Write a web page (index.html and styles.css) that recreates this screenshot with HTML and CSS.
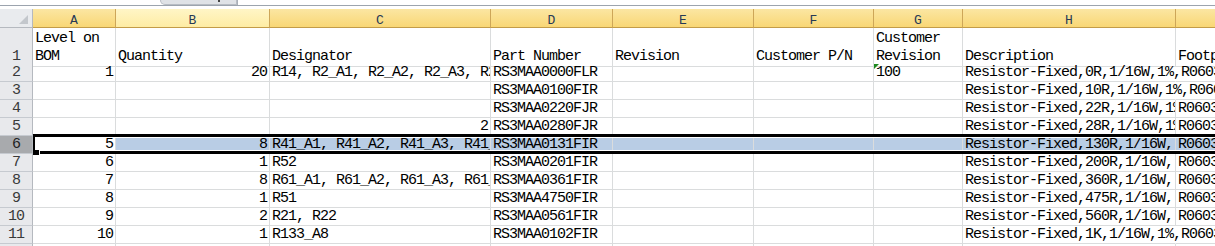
FILE: index.html
```html
<!DOCTYPE html>
<html lang="zh">
<head>
    <meta charset="UTF-8">
    <title>BOM</title>
    <link rel="stylesheet" href="styles.css">
</head>
<body>
    <div class="formula-bar">
        <div class="name-box"><span>A6</span></div>
        <div class="fx-btns"><span class="fx-mark"></span></div>
        <div class="formula-input"><span>5</span></div>
    </div>
    <div class="gap"></div>
    <div class="sheet">
        <div class="row col-heads">
            <div class="corner"></div>
            <div class="ch">A</div>
            <div class="ch hover">B</div>
            <div class="ch">C</div>
            <div class="ch">D</div>
            <div class="ch">E</div>
            <div class="ch">F</div>
            <div class="ch">G</div>
            <div class="ch">H</div>
            <div class="ch">I</div>
        </div>
        <div class="row tall">
            <div class="rh">1</div>
            <div class="c wrap">Level on BOM</div>
            <div class="c">Quantity</div>
            <div class="c">Designator</div>
            <div class="c">Part Number</div>
            <div class="c">Revision</div>
            <div class="c">Customer P/N</div>
            <div class="c wrap">Customer Revision</div>
            <div class="c">Description</div>
            <div class="c">Footprint</div>
        </div>
        <div class="row">
            <div class="rh">2</div>
            <div class="c r">1</div>
            <div class="c r">20</div>
            <div class="c">R14, R2_A1, R2_A2, R2_A3, R2_A4</div>
            <div class="c">RS3MAA0000FLR</div>
            <div class="c"></div>
            <div class="c"></div>
            <div class="c err">100</div>
            <div class="c spill">Resistor-Fixed,0R,1/16W,1%,R0603</div>
            <div class="c"></div>
        </div>
        <div class="row">
            <div class="rh">3</div>
            <div class="c"></div>
            <div class="c"></div>
            <div class="c"></div>
            <div class="c">RS3MAA0100FIR</div>
            <div class="c"></div>
            <div class="c"></div>
            <div class="c"></div>
            <div class="c spill">Resistor-Fixed,10R,1/16W,1%,R0603</div>
            <div class="c"></div>
        </div>
        <div class="row">
            <div class="rh">4</div>
            <div class="c"></div>
            <div class="c"></div>
            <div class="c"></div>
            <div class="c">RS3MAA0220FJR</div>
            <div class="c"></div>
            <div class="c"></div>
            <div class="c"></div>
            <div class="c">Resistor-Fixed,22R,1/16W,1%</div>
            <div class="c">R0603</div>
        </div>
        <div class="row">
            <div class="rh">5</div>
            <div class="c"></div>
            <div class="c"></div>
            <div class="c r">2</div>
            <div class="c">RS3MAA0280FJR</div>
            <div class="c"></div>
            <div class="c"></div>
            <div class="c"></div>
            <div class="c">Resistor-Fixed,28R,1/16W,1%</div>
            <div class="c">R0603</div>
        </div>
        <div class="row sel">
            <div class="rh">6</div>
            <div class="c r">5</div>
            <div class="c r hl">8</div>
            <div class="c hl">R41_A1, R41_A2, R41_A3, R41_A4</div>
            <div class="c hl">RS3MAA0131FIR</div>
            <div class="c hl"></div>
            <div class="c hl"></div>
            <div class="c hl"></div>
            <div class="c hl">Resistor-Fixed,130R,1/16W,</div>
            <div class="c hl">R0603</div>
            <div class="sel-box"></div>
            <div class="fill-handle"></div>
        </div>
        <div class="row">
            <div class="rh">7</div>
            <div class="c r">6</div>
            <div class="c r">1</div>
            <div class="c">R52</div>
            <div class="c">RS3MAA0201FIR</div>
            <div class="c"></div>
            <div class="c"></div>
            <div class="c"></div>
            <div class="c">Resistor-Fixed,200R,1/16W,</div>
            <div class="c">R0603</div>
        </div>
        <div class="row">
            <div class="rh">8</div>
            <div class="c r">7</div>
            <div class="c r">8</div>
            <div class="c">R61_A1, R61_A2, R61_A3, R61_A4</div>
            <div class="c">RS3MAA0361FIR</div>
            <div class="c"></div>
            <div class="c"></div>
            <div class="c"></div>
            <div class="c">Resistor-Fixed,360R,1/16W,</div>
            <div class="c">R0603</div>
        </div>
        <div class="row">
            <div class="rh">9</div>
            <div class="c r">8</div>
            <div class="c r">1</div>
            <div class="c">R51</div>
            <div class="c">RS3MAA4750FIR</div>
            <div class="c"></div>
            <div class="c"></div>
            <div class="c"></div>
            <div class="c">Resistor-Fixed,475R,1/16W,</div>
            <div class="c">R0603</div>
        </div>
        <div class="row">
            <div class="rh">10</div>
            <div class="c r">9</div>
            <div class="c r">2</div>
            <div class="c">R21, R22</div>
            <div class="c">RS3MAA0561FIR</div>
            <div class="c"></div>
            <div class="c"></div>
            <div class="c"></div>
            <div class="c">Resistor-Fixed,560R,1/16W,</div>
            <div class="c">R0603</div>
        </div>
        <div class="row">
            <div class="rh">11</div>
            <div class="c r">10</div>
            <div class="c r">1</div>
            <div class="c">R133_A8</div>
            <div class="c">RS3MAA0102FIR</div>
            <div class="c"></div>
            <div class="c"></div>
            <div class="c"></div>
            <div class="c spill">Resistor-Fixed,1K,1/16W,1%,R0603</div>
            <div class="c"></div>
        </div>
        <div class="row">
            <div class="rh"></div>
            <div class="c"></div>
            <div class="c"></div>
            <div class="c"></div>
            <div class="c"></div>
            <div class="c"></div>
            <div class="c"></div>
            <div class="c"></div>
            <div class="c"></div>
            <div class="c"></div>
        </div>
    </div>
</body>
</html>
```

FILE: styles.css
```css
html, body {
    margin: 0;
    padding: 0;
    background: #fff;
    overflow: hidden;
}
body {
    width: 1215px;
    height: 246px;
    font-family: "Liberation Mono", "Noto Sans CJK SC", monospace;
    font-size: 15px;
    letter-spacing: -1px;
    color: #000;
}
.formula-bar {
    display: flex;
    height: 5px;
    border-bottom: 1px solid #9ca4ae;
    overflow: hidden;
}
.name-box {
    width: 160px;
    padding-left: 62px;
    box-sizing: border-box;
}
.name-box span,
.formula-input span {
    display: block;
    line-height: 16px;
    margin-top: -12px;
    color: #222;
}
.fx-btns {
    position: relative;
    width: 75px;
    height: 4px;
    background: #dfe2e6;
    border: 1px solid #b7bcc3;
    border-top: none;
    border-radius: 0 0 0 14px;
}
.fx-mark {
    position: absolute;
    left: 57px;
    top: 0;
    width: 2px;
    height: 2px;
    background: #444;
}
.formula-input {
    border-left: 1px solid #a9afb7;
    padding-left: 12px;
}
.gap {
    height: 3px;
}
.row {
    display: grid;
    grid-template-columns: 33px 83px 154px 221px 122px 141px 120px 89px 213px 100px;
    height: 18px;
}
.row.tall {
    height: 36px;
}
.row.col-heads {
    height: 19px;
}
.corner {
    position: relative;
    background: #e9ebee;
    border-right: 1px solid #b5b9bf;
    border-bottom: 1px solid #b5b9bf;
}
.corner::after {
    content: "";
    position: absolute;
    right: 4px;
    bottom: 3px;
    border-left: 9px solid transparent;
    border-bottom: 9px solid #c3c7cc;
}
.ch {
    background: linear-gradient(#fbe6a2, #f9d775);
    border-right: 1px solid #cda658;
    border-bottom: 1px solid #c39c48;
    text-align: center;
    font-size: 13px;
    letter-spacing: 0;
    line-height: 15px;
    padding-top: 4px;
    color: #273a55;
    overflow: hidden;
}
.ch.hover {
    background: linear-gradient(#fff5c6, #feeca4);
}
.rh {
    background: #e8e9ec;
    border-right: 1px solid #b5b9bf;
    border-bottom: 1px solid #c6cad0;
    text-align: center;
    line-height: 17px;
    color: #3a3a3a;
}
.c {
    position: relative;
    border-right: 1px solid #dadcdd;
    border-bottom: 1px solid #dadcdd;
    padding: 0 2px;
    line-height: 17px;
    white-space: nowrap;
    overflow: hidden;
}
.r {
    text-align: right;
}
.tall .c,
.tall .rh {
    padding-top: 20px;
    line-height: 18px;
}
.tall .c.wrap {
    padding-top: 2px;
    white-space: normal;
}
.spill {
    overflow: visible;
    border-right-color: transparent;
}
.err::before {
    content: "";
    position: absolute;
    left: 0;
    top: 0;
    border-top: 5px solid #1f8a1f;
    border-right: 5px solid transparent;
}
.hl {
    background: #b9cde5;
}
.sel .rh {
    background: #a8aaad;
    color: #222;
}
.sel {
    position: relative;
}
.sel-box {
    position: absolute;
    left: 33px;
    right: -20px;
    top: -2px;
    bottom: 0;
    border: 3px solid #000;
    border-left-width: 2px;
    box-shadow: inset 0 0 0 1px #fff;
}
.fill-handle {
    position: absolute;
    left: 33px;
    top: 14px;
    width: 6px;
    height: 5px;
    background: #000;
    border-right: 1px solid #fff;
}
```
